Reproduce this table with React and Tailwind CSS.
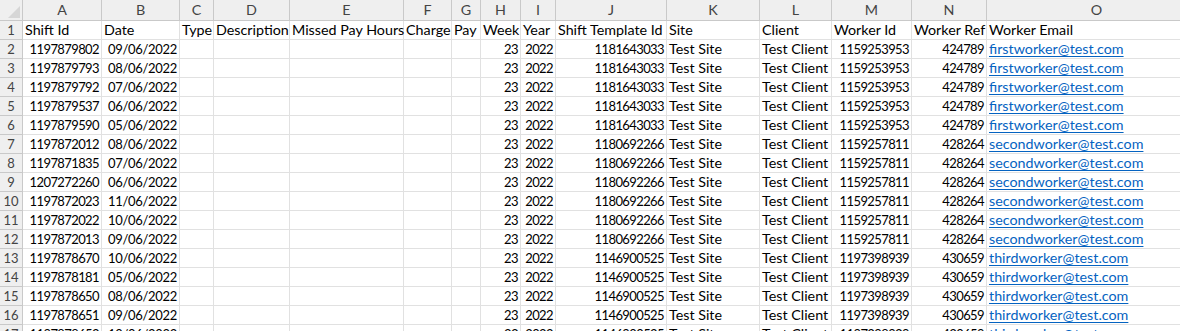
const columns = ['A', 'B', 'C', 'D', 'E', 'F', 'G', 'H', 'I', 'J', 'K', 'L', 'M', 'N', 'O'];

const headings = [
    'Shift Id', 'Date', 'Type', 'Description', 'Missed Pay Hours', 'Charge', 'Pay',
    'Week', 'Year', 'Shift Template Id', 'Site', 'Client', 'Worker Id', 'Worker Ref', 'Worker Email',
];

// how each column's values are shown
const kinds = ['num', 'date', 'text', 'text', 'text', 'text', 'text', 'num', 'num', 'num', 'text', 'text', 'num', 'num', 'link'];

const workers = {
    first: { template: '1181643033', id: '1159253953', ref: '424789', email: 'firstworker@test.com' },
    second: { template: '1180692266', id: '1159257811', ref: '428264', email: 'secondworker@test.com' },
    third: { template: '1146900525', id: '1197398939', ref: '430659', email: 'thirdworker@test.com' },
};

const shifts = [
    ['1197879802', '09/06/2022', 'first'],
    ['1197879793', '08/06/2022', 'first'],
    ['1197879792', '07/06/2022', 'first'],
    ['1197879537', '06/06/2022', 'first'],
    ['1197879590', '05/06/2022', 'first'],
    ['1197872012', '08/06/2022', 'second'],
    ['1197871835', '07/06/2022', 'second'],
    ['1207272260', '06/06/2022', 'second'],
    ['1197872023', '11/06/2022', 'second'],
    ['1197872022', '10/06/2022', 'second'],
    ['1197872013', '09/06/2022', 'second'],
    ['1197878670', '10/06/2022', 'third'],
    ['1197878181', '05/06/2022', 'third'],
    ['1197878650', '08/06/2022', 'third'],
    ['1197878651', '09/06/2022', 'third'],
    ['1197878652', '10/06/2022', 'third'],
];

const rows = shifts.map(([id, date, w]) => {
    const worker = workers[w];
    return [id, date, '', '', '', '', '', '23', '2022', worker.template, 'Test Site', 'Test Client', worker.id, worker.ref, worker.email];
});

const gridCols = 'grid grid-cols-[23px_79px_78px_34px_76px_114px_48px_29px_40px_35px_111px_93px_72px_80px_75px_220px]';

const cellStyle = {
    num: 'justify-end pr-[2px] text-[13px] tracking-[-0.6px]',
    date: 'justify-end pr-[2px] text-[13px] tracking-[-0.3px]',
    text: 'pl-[2px]',
    link: 'pl-[2px]',
};

const Cell = ({ kind, value }) => (
    <div className={`flex items-center border-r border-b border-[#e1e1e1] whitespace-nowrap leading-none ${cellStyle[kind]}`}>
        {kind === 'link' ? (
            <span className="text-[#0563c1] underline underline-offset-[2px]">{value}</span>
        ) : value}
    </div>
);

const RowNumber = ({ n }) => (
    <div className="flex items-center justify-center bg-[#efefef] border-r border-b border-[#c9c9c9] text-[#444] text-[13px] leading-none">
        {n}
    </div>
);

const App = () => {
    return (
        <div
            className="w-[1180px] h-[331px] overflow-hidden bg-white text-[14.3px] text-black"
            style={{ fontFamily: 'Lato, "Open Sans", sans-serif' }}
        >
            {/* column letters */}
            <div className={`${gridCols} h-[21px] bg-[#efefef]`}>
                <div className="relative border-r border-b border-[#c9c9c9]">
                    <div className="absolute right-[2px] bottom-[2px] w-0 h-0 border-l-[12px] border-l-transparent border-b-[12px] border-b-[#d6d6d6]" />
                </div>
                {columns.map(c => (
                    <div
                        key={c}
                        className="flex items-center justify-center border-r border-b border-[#c9c9c9] text-[#444] leading-none"
                    >
                        {c}
                    </div>
                ))}
            </div>

            {/* heading row */}
            <div className={`${gridCols} h-[19px]`}>
                <RowNumber n={1} />
                {headings.map(h => (
                    <div
                        key={h}
                        className="flex items-center pl-[2px] border-r border-b border-[#e1e1e1] whitespace-nowrap leading-none"
                    >
                        {h}
                    </div>
                ))}
            </div>

            {rows.map((row, i) => (
                <div key={i} className={`${gridCols} h-[19px]`}>
                    <RowNumber n={i + 2} />
                    {row.map((value, j) => (
                        <Cell key={j} kind={kinds[j]} value={value} />
                    ))}
                </div>
            ))}
        </div>
    );
};

export default App;
